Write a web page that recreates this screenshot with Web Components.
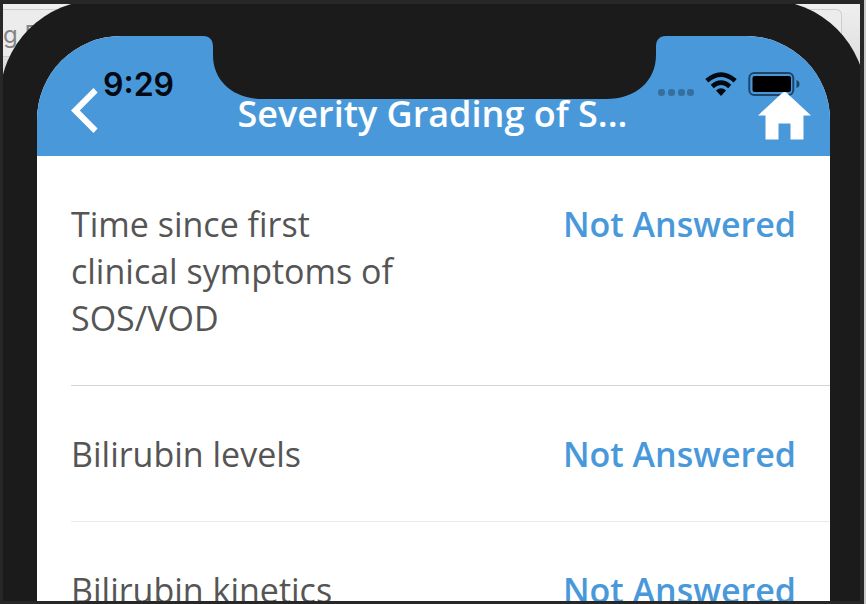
<!DOCTYPE html>
<html lang="en">
<head>
<meta charset="utf-8">
<meta name="viewport" content="width=device-width, initial-scale=1">
<title>Severity Grading</title>
<style>
  body {
    margin: 0;
    font-family: 'Open Sans', 'Noto Sans', sans-serif;
  }
</style>
</head>
<body>
<desktop-window>
  <window-toolbar slot="behind">g F</window-toolbar>
  <phone-frame>
    <status-bar slot="status" time="9:29"></status-bar>
    <nav-header slot="header">Severity Grading of S...</nav-header>
    <question-row answer="Not Answered">Time since first clinical symptoms of SOS/VOD</question-row>
    <question-row answer="Not Answered" faint>Bilirubin levels</question-row>
    <question-row answer="Not Answered">Bilirubin kinetics</question-row>
  </phone-frame>
</desktop-window>

<script>
// Simulator window: toolbar and phone share one grid cell
class DesktopWindow extends HTMLElement {
  constructor() {
    super();
    this.attachShadow({ mode: 'open' });
  }
  connectedCallback() {
    this.shadowRoot.innerHTML = `
      <style>
        :host {
          display: flex;
          box-sizing: border-box;
          height: 100vh;
          overflow: hidden;
          border-right: 2px solid #c9c9c9;
          background: #272727;
        }
        .view {
          display: grid;
          flex: 1;
          margin: 4px 4px 3px 3px;
          overflow: hidden;
          background: linear-gradient(#efefef, #d8d8d8 80px);
        }
        ::slotted(*) { grid-area: 1 / 1; }
      </style>
      <div class="view">
        <slot name="behind"></slot>
        <slot></slot>
      </div>
    `;
  }
}

class WindowToolbar extends HTMLElement {
  constructor() {
    super();
    this.attachShadow({ mode: 'open' });
  }
  connectedCallback() {
    this.shadowRoot.innerHTML = `
      <style>
        :host {
          display: block;
          font: 24px/50px Inter, 'Liberation Sans', sans-serif;
          color: #858585;
        }
        .field {
          height: 46px;
          margin: 5px 18px 0 0;
          border: 1px solid #cdcdcd;
          border-left: 0;
          border-radius: 0 6px 6px 0;
          background: #ececec;
        }
      </style>
      <div class="field"><slot></slot></div>
    `;
  }
}

class PhoneFrame extends HTMLElement {
  constructor() {
    super();
    this.attachShadow({ mode: 'open' });
  }
  connectedCallback() {
    this.shadowRoot.innerHTML = `
      <style>
        :host {
          display: block;
          margin: -4px -6px 0 -3px;
          padding: 36px 36px 0 37px;
          border-radius: 99px 99px 0 0;
          background: #1b1b1b;
        }
        .screen {
          position: relative;
          min-height: 100%;
          border-radius: 84px 84px 0 0;
          overflow: hidden;
          background: #fff;
        }
        .notch {
          position: absolute;
          top: 0;
          left: 166px;
          right: 164px;
          display: flex;
          color: #1b1b1b;
        }
        .notch span {
          flex: 1;
          height: 63px;
          background: currentColor;
        }
        .flip { transform: scaleX(-1); }
      </style>
      <div class="screen">
        <slot name="status"></slot>
        <slot name="header"></slot>
        <div class="notch">
          <svg width="60" height="63"><path fill="currentColor" d="M0 0C7 0 10 4 10 11V19C10 45 30 63 60 63V0Z"/></svg>
          <span></span>
          <svg class="flip" width="60" height="63"><path fill="currentColor" d="M0 0C7 0 10 4 10 11V19C10 45 30 63 60 63V0Z"/></svg>
        </div>
        <main><slot></slot></main>
      </div>
    `;
  }
}

// Sits over the header, below its buttons
class StatusBar extends HTMLElement {
  constructor() {
    super();
    this.attachShadow({ mode: 'open' });
  }
  connectedCallback() {
    const time = this.getAttribute('time') || '';
    this.shadowRoot.innerHTML = `
      <style>
        :host {
          position: absolute;
          top: 36px;
          left: 0;
          right: 0;
          z-index: 1;
          display: flex;
          justify-content: space-between;
          padding: 0 30px 0 66px;
          font: 600 32px/26px Inter, sans-serif;
          color: #020912;
        }
        .icons {
          display: flex;
          gap: 11px;
        }
      </style>
      <time>${time}</time>
      <div class="icons">
        <svg width="36" height="24" fill="#000" fill-opacity=".27">
          <rect x="0" y="17" width="7" height="7" rx="3"/>
          <rect x="10" y="17" width="7" height="7" rx="3"/>
          <rect x="20" y="17" width="7" height="7" rx="3"/>
          <rect x="29" y="17" width="7" height="7" rx="3"/>
        </svg>
        <svg width="32" height="24" fill="none" stroke="currentColor" stroke-width="4.6">
          <path d="M1.8 8.8Q16 -3.6 30.2 8.8"/>
          <path d="M7.2 14.4Q16 6.8 24.8 14.4"/>
          <path fill="currentColor" stroke="none" d="M16 24L11 18.6Q16 14 21 18.6Z"/>
        </svg>
        <svg width="52" height="24">
          <rect x="1.3" y="1" width="44" height="22" rx="5" fill="none" stroke="#1d4469" stroke-width="2"/>
          <rect x="4.5" y="4" width="38.5" height="16" rx="2" fill="#000"/>
          <path fill="#1d4469" d="M48.5 8Q51.5 9 51.5 12T48.5 16Z"/>
        </svg>
      </div>
    `;
  }
}

class NavHeader extends HTMLElement {
  constructor() {
    super();
    this.attachShadow({ mode: 'open' });
  }
  connectedCallback() {
    this.shadowRoot.innerHTML = `
      <style>
        :host {
          display: block;
          background: #4999da;
          color: #fff;
        }
        header {
          display: flex;
          align-items: flex-start;
          height: 52px;
          padding: 52px 19px 16px 34px;
        }
        h1 {
          flex: 1;
          margin: 0;
          font-size: 36px;
          font-weight: 600;
          line-height: 52px;
          text-align: center;
          white-space: nowrap;
        }
        button {
          position: relative;
          z-index: 2;
          display: flex;
          padding: 0;
          border: 0;
          background: none;
          color: inherit;
          cursor: pointer;
        }
        .back { width: 36px; }
        .home { align-self: flex-end; }
      </style>
      <header>
        <button class="back" aria-label="Back">
          <svg width="27" height="45" fill="currentColor"><path d="M22.5 0L0 22.5L22.5 45L26.6 40.6L8.8 22.5L26.6 4.4Z"/></svg>
        </button>
        <h1><slot></slot></h1>
        <button class="home" aria-label="Home">
          <svg width="53" height="48" fill="currentColor"><path d="M24.5 .8Q26.5 -.8 28.5 .8L53 23.4H45.5V47.5H32.5V31.5H20.5V47.5H7.5V23.4H0Z"/></svg>
        </button>
      </header>
    `;
  }
}

class QuestionRow extends HTMLElement {
  constructor() {
    super();
    this.attachShadow({ mode: 'open' });
  }
  connectedCallback() {
    const answer = this.getAttribute('answer') || '';
    this.shadowRoot.innerHTML = `
      <style>
        :host {
          display: flex;
          justify-content: space-between;
          margin-left: 34px;
          padding: 45px 34px 43px 0;
          border-bottom: 1px solid #d4d4d4;
          font-size: 34px;
          line-height: 47px;
          color: #555;
        }
        :host([faint]) { border-color: #ebebeb; }
        .label { width: 46%; }
        .answer {
          font-weight: 600;
          color: #4999da;
          white-space: nowrap;
        }
      </style>
      <div class="label"><slot></slot></div>
      <div class="answer">${answer}</div>
    `;
  }
}

customElements.define('desktop-window', DesktopWindow);
customElements.define('window-toolbar', WindowToolbar);
customElements.define('phone-frame', PhoneFrame);
customElements.define('status-bar', StatusBar);
customElements.define('nav-header', NavHeader);
customElements.define('question-row', QuestionRow);
</script>
</body>
</html>
